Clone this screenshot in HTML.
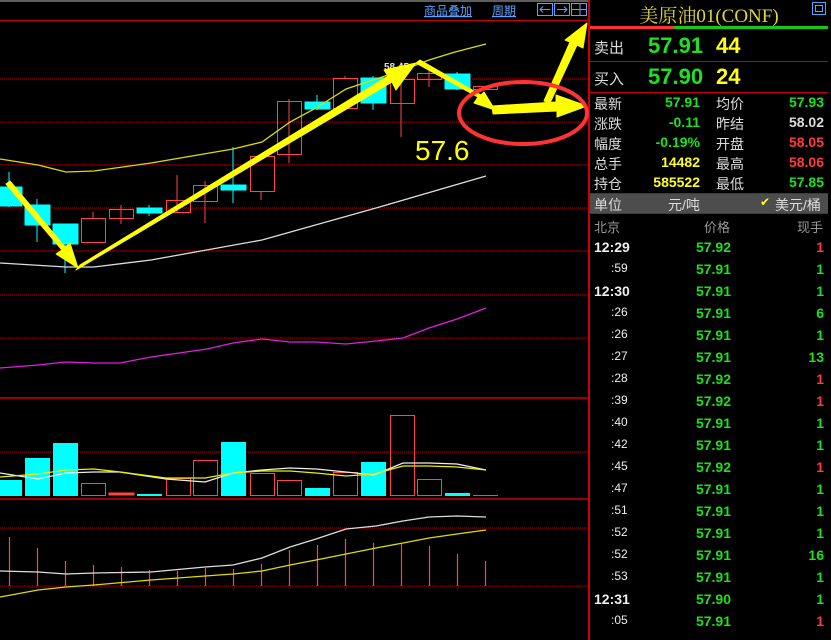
<!DOCTYPE html>
<html><head><meta charset="utf-8"><style>
body{margin:0;background:#000;width:831px;height:640px;overflow:hidden;position:relative;font-family:"Liberation Sans","Noto Sans CJK SC",sans-serif}
.a{position:absolute;white-space:nowrap}
.w{color:#ddd}.g{color:#1de11d}.y{color:#ffff1a}.r{color:#ff3c3c}
.lab{font-size:14px;color:#ddd;left:594px}
.v1{right:131px;font-size:14px;font-weight:bold;text-align:right}
.v2{right:7px;font-size:14px;font-weight:bold;text-align:right}
.lab2{left:716px;font-size:14px;color:#ddd}
.tk{font-size:14px;font-weight:bold}
</style></head><body>
<svg class="a" style="left:0;top:0" width="590" height="640">
<line x1="0" y1="1" x2="590" y2="1" stroke="#bbb"/>
<text x="424" y="15" fill="#5aa0ff" font-size="12" text-decoration="underline" font-family="Noto Sans CJK SC,sans-serif">商品叠加</text>
<text x="492" y="15" fill="#5aa0ff" font-size="12" text-decoration="underline" font-family="Noto Sans CJK SC,sans-serif">周期</text>
<g stroke="#5aa0ff" fill="none"><rect x="537.5" y="3.5" width="15" height="12"/><rect x="554.5" y="3.5" width="15" height="12"/><rect x="571.5" y="3.5" width="15" height="12"/><path d="M540 9.5h10M543 6.5l-3 3 3 3M567 9.5h-10M564 6.5l3 3-3 3M572 9.5h14M580 3.5v12"/></g>
<line x1="0" y1="20.5" x2="590" y2="20.5" stroke="#c00"/>
<g stroke="#c00" stroke-dasharray="1,1">
<line x1="0" y1="79" x2="588" y2="79"/><line x1="0" y1="122" x2="588" y2="122"/><line x1="0" y1="165" x2="588" y2="165"/><line x1="0" y1="208" x2="588" y2="208"/><line x1="0" y1="251" x2="588" y2="251"/><line x1="0" y1="295" x2="588" y2="295"/><line x1="0" y1="338" x2="588" y2="338"/><line x1="0" y1="452" x2="588" y2="452"/><line x1="0" y1="528" x2="588" y2="528"/><line x1="0" y1="586" x2="588" y2="586"/>
</g>
<line x1="0" y1="398" x2="590" y2="398" stroke="#c00" stroke-width="1.5"/>
<line x1="0" y1="499" x2="590" y2="499" stroke="#c00" stroke-width="1.5"/>
<line x1="589" y1="0" x2="589" y2="640" stroke="#c00" stroke-width="2"/>
<g stroke-width="1">
<g stroke="#0ff" fill="#0ff">
<line x1="9" y1="172" x2="9" y2="207"/><rect x="0" y="187" width="22" height="19"/>
<line x1="37" y1="199" x2="37" y2="242"/><rect x="25" y="205" width="25" height="20"/>
<line x1="65" y1="224" x2="65" y2="273"/><rect x="53" y="224" width="25" height="20"/>
<line x1="149" y1="205" x2="149" y2="216"/><rect x="137" y="208" width="25" height="5"/>
<line x1="233" y1="147" x2="233" y2="203"/><rect x="221" y="185" width="25" height="5"/>
<line x1="317" y1="95" x2="317" y2="110"/><rect x="305" y="102" width="25" height="7"/>
<line x1="373" y1="76" x2="373" y2="110"/><rect x="361" y="78" width="25" height="25"/>
<line x1="457" y1="72" x2="457" y2="90"/><rect x="445" y="74" width="25" height="15"/>
</g>
<g stroke="#f44" fill="none">
<line x1="93" y1="212" x2="93" y2="218"/><rect x="81.5" y="218.5" width="24" height="24"/>
<line x1="121" y1="205" x2="121" y2="224"/><rect x="109.5" y="209.5" width="24" height="9"/>
<line x1="177" y1="175" x2="177" y2="213"/><rect x="166.5" y="200.5" width="24" height="12"/>
<line x1="205" y1="181" x2="205" y2="223"/><rect x="193.5" y="185.5" width="24" height="16"/>
<line x1="261" y1="191" x2="261" y2="200"/><rect x="250.5" y="156.5" width="24" height="35"/>
<line x1="289" y1="99" x2="289" y2="163"/><rect x="277.5" y="101.5" width="24" height="53"/>
<line x1="345" y1="76" x2="345" y2="78"/><rect x="333.5" y="78.5" width="24" height="30"/>
<line x1="401" y1="62" x2="401" y2="137"/><rect x="390.5" y="79.5" width="24" height="24"/>
<line x1="429" y1="65" x2="429" y2="87"/><rect x="417.5" y="73.5" width="24" height="6"/>
<rect x="473.5" y="86.5" width="24" height="3"/>
</g>
</g>
<polyline fill="none" stroke="#dd0" stroke-width="1.3" points="0,159 38,165 66,172 94,171 151,163 233,149 262,142 290,122 316,108 346,89 376,79 403,70 429,60 455,52 486,44"/>
<polyline fill="none" stroke="#ddd" stroke-width="1.3" points="0,263 66,267 94,267 151,260 262,240 376,208 486,176"/>
<text x="384" y="70" fill="#ddd" font-size="10" font-weight="bold">58.45</text>
<g fill="#ff0" stroke="#ff0" stroke-linejoin="round">
<path d="M6 184 L62 250 L56 254 L78 268 L70 243 L65 247 L10 181Z"/>
<path d="M76 270 L392 82 L396 90 L416 63 L384 70 L388 76 L80 265Z"/>
<path d="M416 63 L478 97 L474 103 L495 110 L484 92 L481 95 L420 60Z"/>
<path d="M492 106 L556 102 L556 95 L587 106 L557 117 L557 111 L493 114Z"/>
<path d="M544 101 L570 42 L565 40 L587 23 L583 48 L577 45 L550 103Z"/>
</g>
<ellipse cx="523" cy="113" rx="64" ry="31" fill="none" stroke="#f33" stroke-width="4"/>
<text x="415" y="160" fill="#ff0" font-size="28">57.6</text>
<polyline fill="none" stroke="#e01ee0" stroke-width="1.3" points="0,368 38,365 66,362 94,363 120,363 151,357 207,349 233,343 262,339 290,342 316,342 346,344 376,341 403,338 429,328 457,319 486,308"/>
<g fill="#0ff"><rect x="0" y="480" width="22" height="16"/><rect x="25" y="458" width="25" height="38"/><rect x="53" y="443" width="25" height="53"/><rect x="137" y="494" width="25" height="2"/><rect x="221" y="442" width="25" height="54"/><rect x="305" y="488" width="25" height="8"/><rect x="361" y="462" width="25" height="34"/><rect x="445" y="493" width="25" height="3"/></g>
<g fill="none" stroke="#f44"><rect x="81.5" y="483.5" width="24" height="12"/><rect x="109" y="493" width="25" height="2" fill="#f44"/><rect x="166.5" y="478.5" width="24" height="17"/><rect x="193.5" y="460.5" width="24" height="35"/><rect x="250.5" y="473.5" width="24" height="22"/><rect x="277.5" y="480.5" width="24" height="15"/><rect x="333.5" y="472.5" width="24" height="23"/><rect x="390.5" y="415.5" width="24" height="80"/><rect x="417.5" y="479.5" width="24" height="16"/><line x1="473" y1="495.5" x2="498" y2="495.5"/></g>
<polyline fill="none" stroke="#eee" stroke-width="1.3" points="0,473 38,479 66,473 94,472 120,472 166,479 205,482 233,473 262,470 290,468 316,469 346,472 374,475 403,463 429,463 457,464 486,470"/>
<polyline fill="none" stroke="#ee0" stroke-width="1.3" points="0,477 38,474 66,470 94,469 120,472 166,478 205,478 233,473 262,471 290,471 316,473 346,476 374,474 403,466 429,466 457,467 486,470"/>
<g stroke="#f44" stroke-width="1.2"><line x1="9.5" y1="586" x2="9.5" y2="537"/><line x1="37.5" y1="586" x2="37.5" y2="548"/><line x1="65.5" y1="586" x2="65.5" y2="561"/><line x1="93.5" y1="586" x2="93.5" y2="565"/><line x1="121.5" y1="586" x2="121.5" y2="567"/><line x1="149.5" y1="586" x2="149.5" y2="570"/><line x1="177.5" y1="586" x2="177.5" y2="571"/><line x1="205.5" y1="586" x2="205.5" y2="568"/><line x1="233.5" y1="586" x2="233.5" y2="569"/><line x1="261.5" y1="586" x2="261.5" y2="564"/><line x1="289.5" y1="586" x2="289.5" y2="550"/><line x1="317.5" y1="586" x2="317.5" y2="545"/><line x1="345.5" y1="586" x2="345.5" y2="539"/><line x1="373.5" y1="586" x2="373.5" y2="543"/><line x1="401.5" y1="586" x2="401.5" y2="543"/><line x1="429.5" y1="586" x2="429.5" y2="546"/><line x1="457.5" y1="586" x2="457.5" y2="554"/><line x1="485.5" y1="586" x2="485.5" y2="561"/></g>
<polyline fill="none" stroke="#ddd" stroke-width="1.3" points="0,571 38,572 66,574 94,573 151,572 205,567 233,565 262,558 290,547 316,539 346,529 376,526 403,521 429,517 457,516 486,517"/>
<polyline fill="none" stroke="#dd0" stroke-width="1.3" points="0,597 38,590 66,587 94,585 151,580 205,576 233,574 262,571 290,565 316,560 346,554 376,548 403,543 429,538 457,534 486,530"/>
</svg>
<div class="a" style="left:590px;top:1px;width:238px;text-align:center;font-size:19px;color:#e0d830;font-family:'Liberation Serif','Noto Serif CJK SC',serif">美原油01(CONF)</div>
<div class="a" style="left:812px;top:2px;width:12px;height:11px;border:1px solid #5aa0ff"></div>
<div class="a" style="left:815px;top:5px;width:6px;height:5px;border:1px solid #5aa0ff"></div>
<div class="a" style="left:590px;top:26px;width:84px;height:3px;background:#f33"></div>
<div class="a" style="left:674px;top:26px;width:154px;height:3px;background:#1c1"></div>
<div class="a" style="left:590px;top:61px;width:241px;height:1px;background:#c00"></div>
<div class="a" style="left:590px;top:92px;width:241px;height:1px;background:#c00"></div>
<div class="a" style="left:590px;top:193px;width:241px;height:21px;background:#4d4d4d;border-top:1px solid #c00;border-bottom:1px solid #c00;box-sizing:border-box"></div>
<div class="a" style="left:828px;top:0;width:3px;height:640px;background:#000"></div>
<div class="a lab" style="top:37px;font-size:15px">卖出</div>
<div class="a g" style="left:648px;top:33px;font-size:22px;font-weight:bold">57.91</div>
<div class="a y" style="left:716px;top:33px;font-size:22px;font-weight:bold">44</div>
<div class="a lab" style="top:68px;font-size:15px">买入</div>
<div class="a g" style="left:648px;top:64px;font-size:22px;font-weight:bold">57.90</div>
<div class="a y" style="left:716px;top:64px;font-size:22px;font-weight:bold">24</div>
<div class="a lab" style="top:94px">最新</div><div class="a v1 g" style="top:94px">57.91</div><div class="a lab2" style="top:94px">均价</div><div class="a v2 g" style="top:94px">57.93</div>
<div class="a lab" style="top:114px">涨跌</div><div class="a v1 g" style="top:114px">-0.11</div><div class="a lab2" style="top:114px">昨结</div><div class="a v2 w" style="top:114px">58.02</div>
<div class="a lab" style="top:134px">幅度</div><div class="a v1 g" style="top:134px">-0.19%</div><div class="a lab2" style="top:134px">开盘</div><div class="a v2 r" style="top:134px">58.05</div>
<div class="a lab" style="top:154px">总手</div><div class="a v1 y" style="top:154px">14482</div><div class="a lab2" style="top:154px">最高</div><div class="a v2 r" style="top:154px">58.06</div>
<div class="a lab" style="top:174px">持仓</div><div class="a v1 y" style="top:174px">585522</div><div class="a lab2" style="top:174px">最低</div><div class="a v2 g" style="top:174px">57.85</div>
<div class="a lab" style="top:195px">单位</div>
<div class="a" style="left:668px;top:195px;font-size:14px;color:#ddd">元/吨</div>
<div class="a y" style="left:760px;top:195px;font-size:12px">✔</div>
<div class="a" style="left:775px;top:195px;font-size:14px;color:#ddd">美元/桶</div>
<div class="a" style="left:594px;top:217px;font-size:13px;color:#999">北京</div>
<div class="a" style="left:704px;top:217px;font-size:13px;color:#999">价格</div>
<div class="a" style="left:797px;top:217px;font-size:13px;color:#999">现手</div>
<div id="t"></div>
<script>
var d=[["12:29","57.92","1","r"],[":59","57.91","1","g"],["12:30","57.91","1","g"],[":26","57.91","6","g"],[":26","57.91","1","g"],[":27","57.91","13","g"],[":28","57.92","1","r"],[":39","57.92","1","r"],[":40","57.91","1","g"],[":42","57.91","1","g"],[":45","57.92","1","r"],[":47","57.91","1","g"],[":51","57.91","1","g"],[":52","57.91","1","g"],[":52","57.91","16","g"],[":53","57.91","1","g"],["12:31","57.90","1","g"],[":05","57.91","1","r"]];
var h="";d.forEach(function(r,i){var y=239+22*i;var big=r[0].length>3;
h+='<div class="a tk" style="top:'+y+'px;left:'+(big?594:611)+'px;color:#eee;font-weight:'+(big?'bold':'normal')+';font-size:'+(big?14:12)+'px">'+r[0]+'</div>';
h+='<div class="a tk g" style="top:'+y+'px;right:100px">'+r[1]+'</div>';
h+='<div class="a tk '+r[3]+'" style="top:'+y+'px;right:7px">'+r[2]+'</div>';});
document.getElementById("t").innerHTML=h;
</script>
</body></html>
